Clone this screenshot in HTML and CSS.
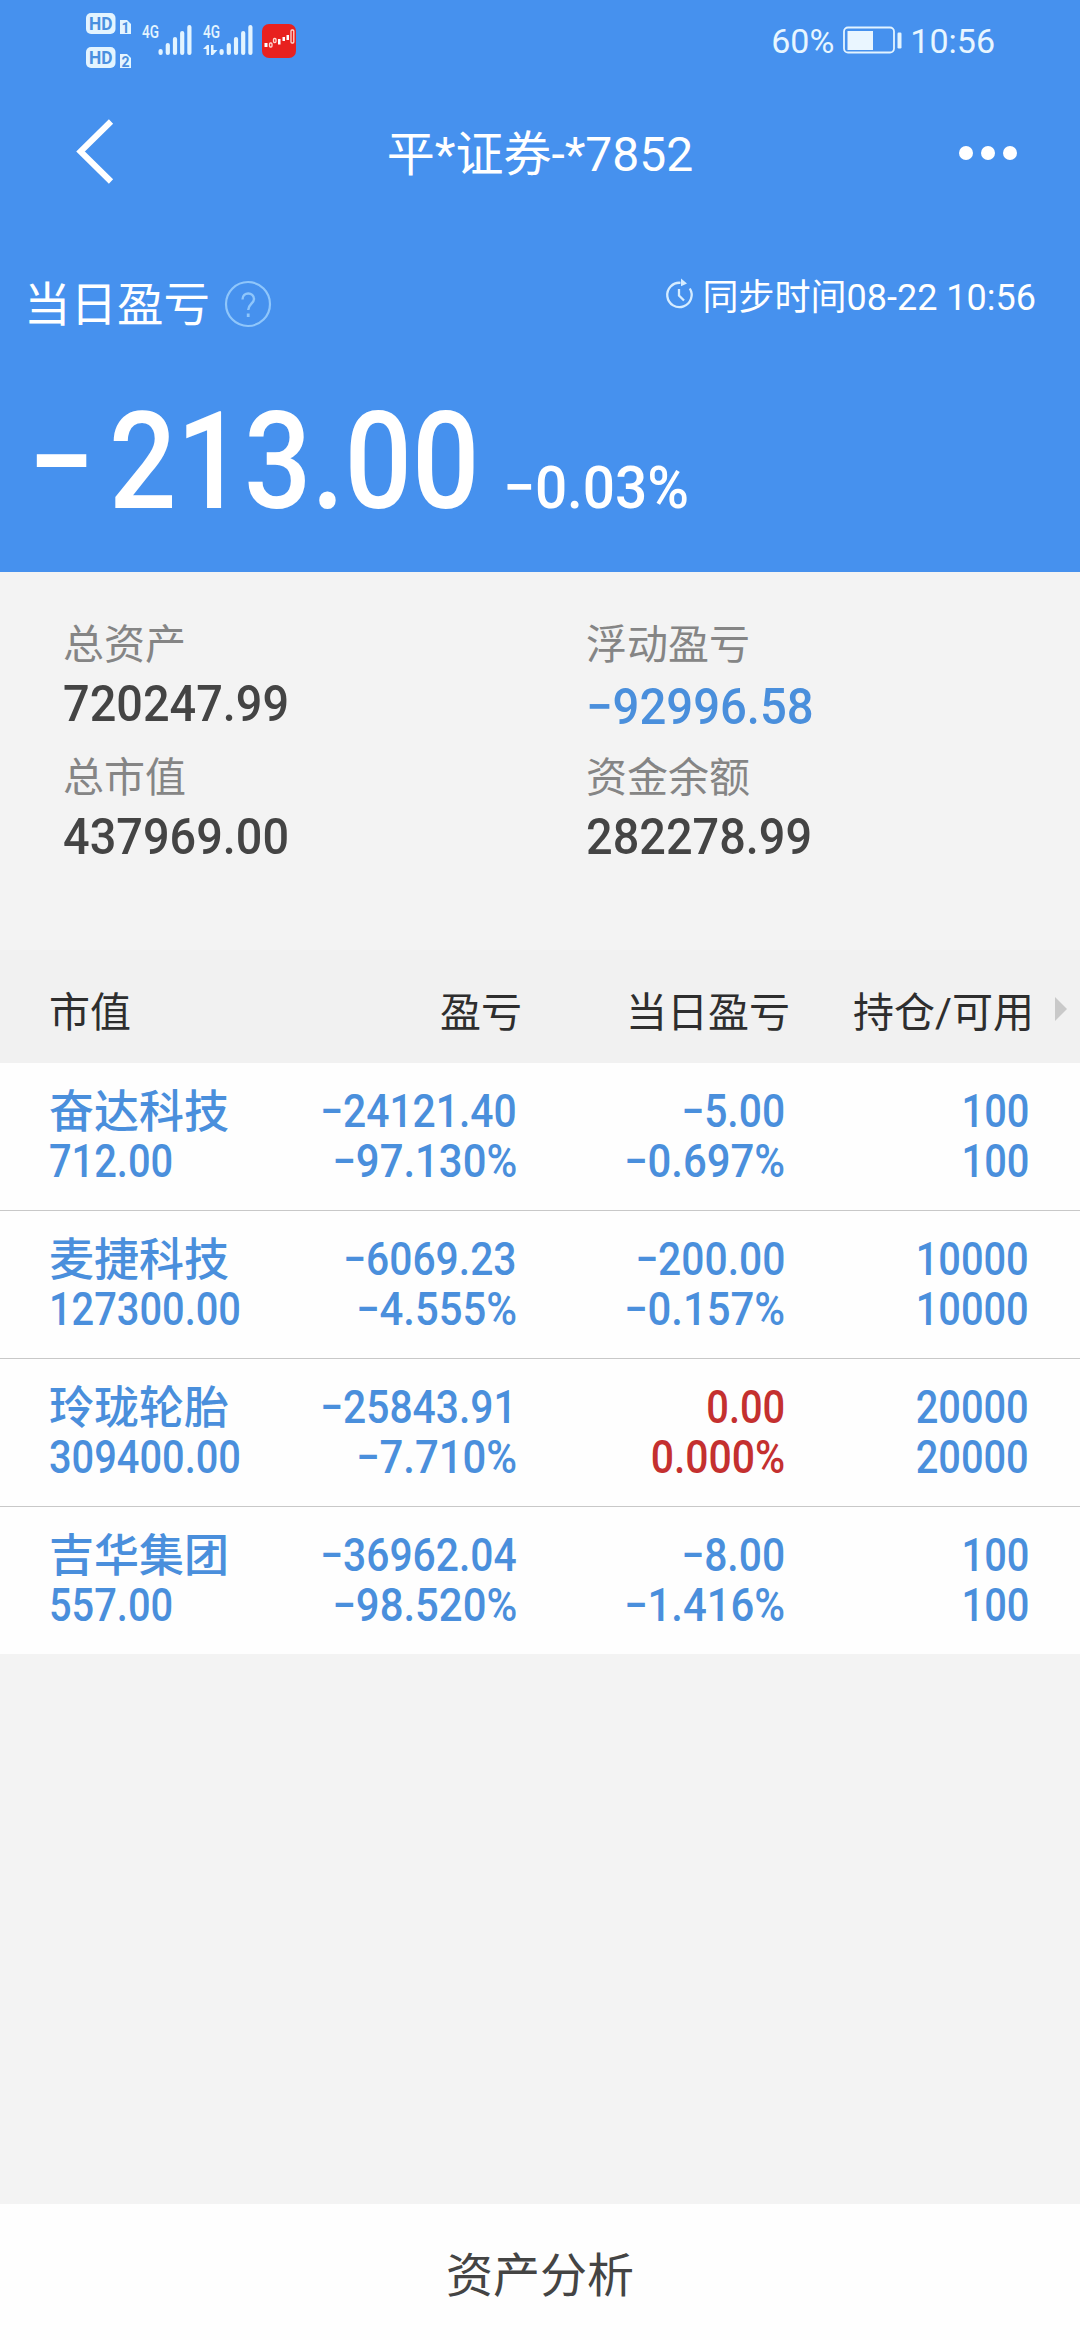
FILE: index.html
```html
<!DOCTYPE html>
<html lang="zh-CN">
<head>
<meta charset="utf-8">
<title>平*证券-*7852</title>
<link rel="stylesheet" href="styles.css">
</head>
<body>
<header class="hero">
  <div class="status">
    <svg class="status-icons" width="214" height="60" viewBox="84 0 214 60">
      <g fill="#e3f4ff">
        <rect x="86" y="13" width="29.500" height="21" rx="5"/>
        <rect x="86" y="47" width="29.500" height="21" rx="5"/>
        <path d="M120 20h7l4 4v10h-11zM120 54h7l4 4v10h-11z"/>
        <text x="142" y="38" class="net" textLength="17" lengthAdjust="spacingAndGlyphs">4G</text>
        <text x="203" y="38" class="net" textLength="17" lengthAdjust="spacingAndGlyphs">4G</text>
        <path d="M203 49l4-4h2v10h-2.500v-6zM211 45h2.500v5h4l-4.500 5h-2z"/>
      </g>
      <g fill="none" stroke="#e3f4ff" stroke-width="4.200" stroke-linecap="round">
        <path d="M160.600 51v2M167.800 45v8M175 39v14M182.200 33v20M189.400 27v26"/>
        <path d="M221.600 51v2M228.800 45v8M236 39v14M243.200 33v20M250.400 27v26"/>
      </g>
      <g class="badge-text">
        <text x="89" y="30" font-size="18" textLength="23.500" lengthAdjust="spacingAndGlyphs">HD</text>
        <text x="89" y="64" font-size="18" textLength="23.500" lengthAdjust="spacingAndGlyphs">HD</text>
        <text x="121.500" y="33" font-size="14">1</text>
        <text x="121.500" y="67" font-size="14">2</text>
      </g>
      <rect x="262" y="24" width="34" height="34" rx="7" fill="#e8211f"/>
      <g fill="none" stroke="#ffd9cf" stroke-width="1.300">
        <rect x="269.500" y="43" width="2.500" height="4" rx="1"/>
        <rect x="273.500" y="38.500" width="2.500" height="4" rx="1"/>
        <rect x="291" y="30" width="2.800" height="13" rx="1"/>
      </g>
      <path fill="#fff" d="M264.500 43h3v4h-3zM278 39h2.500v5.500h-2.500zM282.500 37h2.500v4h-2.500zM286.500 35h2.500v5h-2.500z"/>
    </svg>
    <div class="status-right">
      <span>60%</span>
      <svg class="battery" width="60" height="28" viewBox="0 0 60 28">
        <rect x="1" y="1.500" width="50" height="25" rx="4" fill="none" stroke="#e3f4ff" stroke-width="1.800"/>
        <rect x="4.500" y="5" width="25.500" height="19" fill="#eaf6ff"/>
        <rect x="54.500" y="6.500" width="4" height="16" rx="1.200" fill="#e3f4ff"/>
      </svg>
      <span>10:56</span>
    </div>
  </div>
  <nav class="navbar">
    <svg class="back" width="40" height="68" viewBox="0 0 40 68"><path d="M35 4.500L4.500 34.500L35 64.500" fill="none" stroke="#fff" stroke-width="6"/></svg>
    <h1 class="title">平*证券-*7852</h1>
    <svg class="more" width="60" height="16" viewBox="0 0 60 16" fill="#fff"><circle cx="8" cy="8" r="7"/><circle cx="30" cy="8" r="7"/><circle cx="52" cy="8" r="7"/></svg>
  </nav>
  <div class="day-head">
    <span class="day-label">当日盈亏</span>
    <svg class="help" width="48" height="48" viewBox="0 0 48 48" fill="none" stroke="#8fc6fb"><circle cx="24" cy="24" r="22" stroke-width="2.200"/><path d="M18.500 19.500c0-8 11.500-8 11.500-.5c0 4.500-5.800 5-5.800 11" stroke-width="2.400"/><path d="M24.200 33.500v3.500" stroke-width="2.800"/></svg>
    <div class="sync">
      <svg width="30" height="32" viewBox="0 0 30 32" fill="none" stroke="#d5ecff" stroke-width="2.300"><path d="M16.500 4.800A12.200 12.200 0 1 0 25.800 10.500"/><path d="M15 11v6.500l5 5"/><path d="M17 .5l6 5l-6 2.800z" fill="#d5ecff" stroke="none"/></svg>
      <span>同步时间08-22 10:56</span>
    </div>
  </div>
  <div class="day-value">
    <span class="big"><span class="sign">−</span>213.00</span>
    <span class="pct">−0.03%</span>
  </div>
</header>

<section class="summary">
  <div class="stat"><div class="stat-label">总资产</div><div class="stat-value">720247.99</div></div>
  <div class="stat"><div class="stat-label">浮动盈亏</div><div class="stat-value down">−92996.58</div></div>
  <div class="stat"><div class="stat-label">总市值</div><div class="stat-value">437969.00</div></div>
  <div class="stat"><div class="stat-label">资金余额</div><div class="stat-value">282278.99</div></div>
</section>

<section class="holdings">
  <div class="thead">
    <span>市值</span><span>盈亏</span><span>当日盈亏</span><span>持仓/可用</span>
    <svg class="next" width="12" height="24" viewBox="0 0 12 24"><path d="M0 0l12 12L0 24z" fill="#c9c9c9"/></svg>
  </div>
  <div class="row">
    <div class="cell"><b class="name">奋达科技</b><span>712.00</span></div>
    <div class="cell change"><span>−24121.40</span><span>−97.130%</span></div>
    <div class="cell change"><span>−5.00</span><span>−0.697%</span></div>
    <div class="cell"><span>100</span><span>100</span></div>
  </div>
  <div class="row">
    <div class="cell"><b class="name">麦捷科技</b><span>127300.00</span></div>
    <div class="cell change"><span>−6069.23</span><span>−4.555%</span></div>
    <div class="cell change"><span>−200.00</span><span>−0.157%</span></div>
    <div class="cell"><span>10000</span><span>10000</span></div>
  </div>
  <div class="row">
    <div class="cell"><b class="name">玲珑轮胎</b><span>309400.00</span></div>
    <div class="cell change"><span>−25843.91</span><span>−7.710%</span></div>
    <div class="cell flat"><span>0.00</span><span>0.000%</span></div>
    <div class="cell"><span>20000</span><span>20000</span></div>
  </div>
  <div class="row">
    <div class="cell"><b class="name">吉华集团</b><span>557.00</span></div>
    <div class="cell change"><span>−36962.04</span><span>−98.520%</span></div>
    <div class="cell change"><span>−8.00</span><span>−1.416%</span></div>
    <div class="cell"><span>100</span><span>100</span></div>
  </div>
</section>

<footer class="footer">资产分析</footer>
</body>
</html>
```

FILE: styles.css
```css
* { box-sizing: border-box; }
body {
  margin: 0;
  width: 1080px;
  height: 2340px;
  display: flex;
  flex-direction: column;
  background: #f3f3f3;
  font-family: Roboto, "Noto Sans CJK SC", sans-serif;
  overflow: hidden;
}
svg { display: block; flex: none; overflow: visible; }

.hero { height: 572px; background: #4691ee; color: #fff; }
.status { height: 80px; display: flex; justify-content: space-between; padding: 0 85px 0 84px; }
.status-right { display: flex; align-items: center; height: 82px; font-size: 34px; color: #e8f6ff; }
.battery { margin: 0 7px 2px 9px; }
.net { font: 500 18px Roboto, sans-serif; }
.badge-text { fill: #4a8fdf; font-family: Roboto, sans-serif; font-weight: 700; }

.navbar { height: 148px; display: grid; grid-template-columns: 1fr auto 1fr; align-items: center; padding: 0 62px 4px 74px; }
.back { margin: -2px 0 0 2px; }
.title { margin: 5px 10px 0 -2px; font-size: 48px; font-weight: 400; line-height: 60px; }
.more { justify-self: end; margin-top: 1px; }

.day-head { height: 154px; display: flex; align-items: center; padding: 0 44px 2px 24px; }
.day-label { font-size: 46.500px; line-height: 60px; padding-top: 2px; }
.help { margin-left: 14px; }
.sync { margin-left: auto; display: flex; align-items: center; gap: 9px; font-size: 36px; padding-bottom: 20px; }

/* Figures are set slightly condensed */
.big, .pct, .stat-value, .cell span { transform-origin: left center; }
.day-value { display: flex; align-items: baseline; padding-left: 28px; }
.big { width: 475px; font-size: 135px; line-height: 160px; font-weight: 500; white-space: nowrap; transform: scaleX(.88); }
.sign { letter-spacing: 16px; }
.pct { font-size: 60px; font-weight: 500; transform: scaleX(.945); }

.summary { height: 378px; display: grid; grid-template-columns: 523px 1fr; grid-auto-rows: 133px; padding: 44px 0 0 63px; }
.stat-label { font-size: 41px; line-height: 58px; color: #858585; }
.stat-value { font-size: 50px; line-height: 60px; font-weight: 500; transform: scaleX(.937); color: #444; }
.down { color: #4a8fdc; padding-top: 3px; transform: scaleX(.945); }

.thead, .row { display: grid; grid-template-columns: 199px 269px 268px 244px 1fr; padding-left: 49px; }
.thead { height: 113px; align-items: center; text-align: right; font-size: 41px; color: #2e2e2e; background: #f1f1f1; padding-top: 4px; }
.thead span { white-space: nowrap; margin-right: -5px; }
.thead span:first-child { text-align: left; }
.next { margin: 0 0 0 26px; }
.row { height: 148px; padding-top: 23px; border-bottom: 1px solid #c8c8c8; background: #fefefe; color: #4a8fdc; }
.row:last-child { height: 147px; border-bottom: 0; }
.cell { display: flex; flex-direction: column; align-items: flex-end; font-size: 46px; line-height: 50px; font-weight: 500; white-space: nowrap; }
.cell span { transform: scaleX(.865); transform-origin: right center; }
.cell:first-child { align-items: flex-start; }
.cell:first-child span { transform-origin: left center; }
.change span { transform: scaleX(.887); }
.change span:last-child { transform: scaleX(.91); }
.flat span:last-child { transform: scaleX(.89); }
.name { height: 50px; font-size: 45px; line-height: 54px; font-weight: 500; }
.flat { color: #c4302f; }

.footer { margin-top: auto; height: 136px; background: #fefefe; text-align: center; font-size: 47px; line-height: 144px; color: #444; }
```
